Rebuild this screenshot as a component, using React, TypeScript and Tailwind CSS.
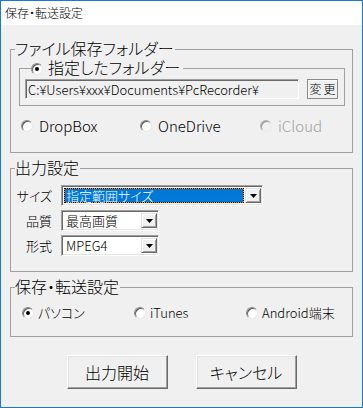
import React from "react";

const LEG = "ml-[4px] pr-[1px] text-[16px] leading-[17px] font-['Liberation_Sans','Noto_Sans_CJK_JP',sans-serif]";

function Radio({ checked = false, disabled = false }: { checked?: boolean; disabled?: boolean }) {
  return (
    <span
      className={
        "relative inline-flex w-[12px] h-[12px] shrink-0 items-center justify-center rounded-full border border-t-[#8a8a8a] border-l-[#8a8a8a] border-b-[#e8e8e8] border-r-[#e8e8e8] shadow-[inset_1px_1px_0_#5a5a5a] " +
        (disabled ? "bg-[#f0f0f0] opacity-60" : "bg-white")
      }
    >
      {checked && <span className="w-[4px] h-[4px] rounded-full bg-black" />}
    </span>
  );
}

function Combo({
  text,
  width,
  selected = false,
}: {
  text: string;
  width: string;
  selected?: boolean;
}) {
  return (
    <div
      className={
        width +
        " h-[21px] flex bg-white border border-t-[#a0a0a0] border-l-[#a0a0a0] border-b-white border-r-white shadow-[inset_1px_1px_0_#696969,inset_-1px_-1px_0_#e3e3e3] p-[2px] pr-[1px]"
      }
    >
      {selected ? (
        <div className="flex-1 bg-[#ff8728] mr-[1px]">
          <div className="h-full border border-dotted border-black bg-[#0078d7] bg-clip-padding text-white text-[13px] leading-[13px] pl-[1px] flex items-center whitespace-nowrap">
            {text}
          </div>
        </div>
      ) : (
        <div className="flex-1 text-[13px] leading-[13px] pl-[2px] flex items-center text-black whitespace-nowrap">{text}</div>
      )}
      <div className="w-[16px] h-full flex items-center justify-center bg-[#f0f0f0] border border-t-[#e3e3e3] border-l-[#e3e3e3] border-b-[#696969] border-r-[#696969] shadow-[inset_1px_1px_0_#fff,inset_-1px_-1px_0_#a0a0a0]">
        <svg width="7" height="4" viewBox="0 0 7 4">
          <polygon points="0,0 7,0 3.5,4" fill="#000" />
        </svg>
      </div>
    </div>
  );
}

export default function App() {
  return (
    <div className="w-[363px] h-[408px] flex flex-col border border-[#1979ca] bg-[#f0f0f0] text-black font-light font-['Noto_Sans_CJK_JP',sans-serif] [font-feature-settings:'palt']">
      <div className="h-[24px] shrink-0 bg-white flex items-center pl-[4px] text-[12px] leading-[12px]">
        保存・転送設定
      </div>
      <div className="flex-1 flex flex-col px-[9px] pt-[16px]">
        {/* Group 1 */}
        <fieldset className="border border-[#a0a0a0] pb-[18px]">
          <legend className={LEG}>ファイル保存フォルダー</legend>
          <fieldset className="mt-[2px] ml-[8px] mr-[7px] border border-[#a0a0a0] pl-[5px] pr-[6px] pb-[6px]">
            <legend className="ml-[6px] pr-[3px]">
              <span className="flex items-center gap-[5px] text-[16px] leading-[17px] font-['Liberation_Sans','Noto_Sans_CJK_JP',sans-serif]">
                <Radio checked />
                指定したフォルダー
              </span>
            </legend>
            <div className="mt-[2px] flex items-center gap-[8px]">
              <div className="flex-1 h-[20px] flex items-center pl-[2px] bg-[#f0f0f0] border border-t-[#a0a0a0] border-l-[#a0a0a0] border-b-white border-r-white shadow-[inset_1px_1px_0_#696969] text-[13px] leading-[13px] whitespace-nowrap overflow-hidden">
                C:¥Users¥xxx¥Documents¥PcRecorder¥
              </div>
              <div className="w-[31px] h-[20px] shrink-0 flex items-center justify-center border border-[#8a8a8a] shadow-[inset_1px_1px_0_#fff] text-[12px] leading-[12px] tracking-[2px] pl-[2px] whitespace-nowrap">
                変更
              </div>
            </div>
          </fieldset>
          <div className="mt-[12px] pl-[10px] flex items-center h-[16px] text-[15px] leading-[16px]">
            <div className="w-[119px] flex items-center gap-[6px]">
              <Radio />
              <span>DropBox</span>
            </div>
            <div className="w-[120px] flex items-center gap-[6px]">
              <Radio />
              <span>OneDrive</span>
            </div>
            <div className="flex items-center gap-[6px] text-[#a0a0a0]">
              <Radio disabled />
              <span>iCloud</span>
            </div>
          </div>
        </fieldset>

        {/* Group 2 */}
        <fieldset className="mt-[7px] border border-[#a0a0a0] pb-[15px]">
          <legend className={LEG}>出力設定</legend>
          <div className="mt-[8px] grid grid-cols-[41px_auto] gap-x-[9px] gap-y-[4px] items-center text-[13px] leading-[13px]">
            <div className="text-right">サイズ</div>
            <Combo text="指定範囲サイズ" width="w-[202px]" selected />
            <div className="text-right">品質</div>
            <Combo text="最高画質" width="w-[98px]" />
            <div className="text-right">形式</div>
            <Combo text="MPEG4" width="w-[98px]" />
          </div>
        </fieldset>

        {/* Group 3 */}
        <fieldset className="mt-[7px] border border-[#a0a0a0] pb-[15px]">
          <legend className={LEG}>保存・転送設定</legend>
          <div className="mt-[9px] pl-[11px] flex items-center h-[16px] text-[13px] leading-[16px]">
            <div className="w-[112px] flex items-center gap-[4px]">
              <Radio checked />
              <span>パソコン</span>
            </div>
            <div className="w-[112px] flex items-center gap-[4px]">
              <Radio />
              <span>iTunes</span>
            </div>
            <div className="flex items-center gap-[4px]">
              <Radio />
              <span>Android端末</span>
            </div>
          </div>
        </fieldset>

        {/* Buttons */}
        <div className="mt-[18px] flex justify-center gap-[28px]">
          {["出力開始", "キャンセル"].map((t) => (
            <div
              key={t}
              className="w-[101px] h-[34px] flex items-center justify-center bg-[#f0f0f0] border border-t-white border-l-white border-b-[#696969] border-r-[#696969] shadow-[inset_-1px_-1px_0_#a0a0a0,inset_1px_1px_0_#e3e3e3] text-[16px] leading-[16px]"
            >
              {t}
            </div>
          ))}
        </div>
      </div>
    </div>
  );
}
